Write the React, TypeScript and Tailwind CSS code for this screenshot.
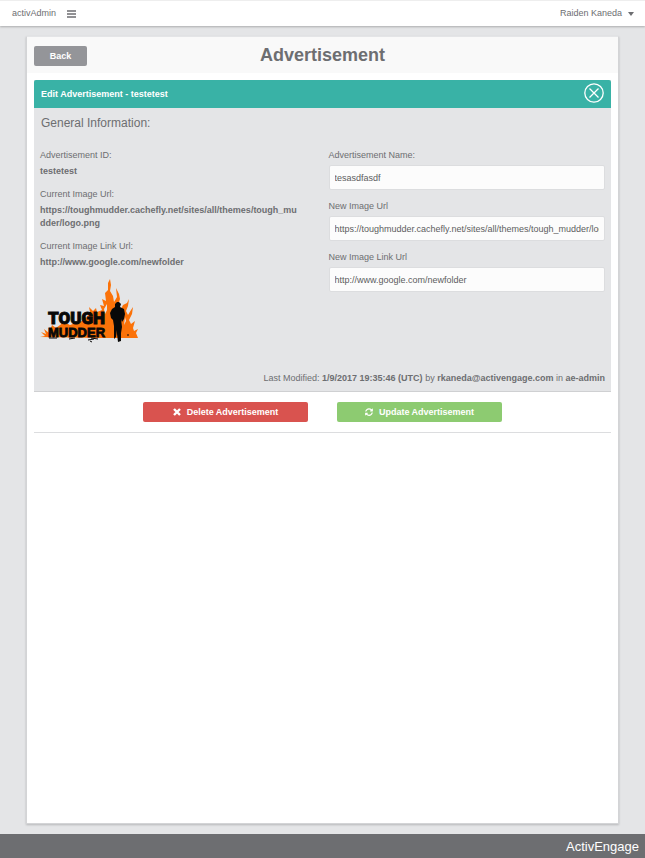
import { FaSyncAlt } from "react-icons/fa";

function Logo() {
  return (
    <svg viewBox="0 0 98 64" className="h-[64px] w-[98px]" role="img" aria-label="Tough Mudder">
      <path
        fill="#fb7209"
        d="M0 58 L5 57 L1 53 L6 55 L4 50 L9 54 L12 46 L16 49 L24 43 L30 46 L42 42 L43 34 L46 39 L50 33 L49 28 L53 32 L56 29 L57 33 L62 31 L60 26 L64 27 L62 20 L66 22 L65 14 L68 11 L68 4 L70 0 L71 6 L70 12 L73 17 L74 23 L77 18 L76 9 L79 15 L80 20 L78 27 L81 30 L83 26 L87 24 L89 20 L88 27 L86 32 L88 36 L91 31 L93 28 L92 35 L89 41 L91 45 L95 42 L93 49 L94 52 L98 50 L96 54 L98 59 L60 59 Z"
      />
      <path fill="#e4e5e7" d="M64 30 L67 25 L67 31 L65 35 Z M85 38 L86 42 L84 46 Z" />
      <g fill="#080808" stroke="#080808">
        <text x="8" y="45" fontSize="17" fontWeight="900" strokeWidth="0.9" fontFamily="Roboto, sans-serif">TOUGH</text>
        <text x="8" y="58" fontSize="13" fontWeight="700" strokeWidth="0.8" fontFamily="'Liberation Sans', Arial, sans-serif">MUDDER</text>
      </g>
      <path
        fill="#080808"
        d="M75 28 L75 25 L77 23 L79 23 L81 25 L80 28 L84 30 L85 35 L84 40 L82 43 L81 40 L82 48 L81 54 L81 62 L78 63 L77 55 L77 51 L76 58 L74 60 L74 47 L73 41 L71 39 L70 34 L72 30 Z"
      />
      <path stroke="#080808" strokeWidth="1" fill="none" d="M9 59h8M29 60l6-1M48 61l6-1M51 59l7 1M50 62l2 1M87 56h2" />
    </svg>
  );
}

function Detail({ label, value }: { label: string; value: string }) {
  return (
    <div className="mb-[10px]">
      <dt>{label}</dt>
      <dd className="mt-[3px] font-bold break-all">{value}</dd>
    </div>
  );
}

function Field({ id, label, value }: { id: string; label: string; value: string }) {
  return (
    <div className="mb-[10px]">
      <label htmlFor={id} className="block">{label}</label>
      <input
        id={id}
        type="text"
        defaultValue={value}
        className="mt-[3px] block h-[25px] w-full rounded-xs border border-[#dcdddf] bg-[#fcfcfc] px-[5px] text-[#5c5d60]"
      />
    </div>
  );
}

export default function App() {
  return (
    <div className="flex min-h-screen flex-col bg-[#e4e5e7] font-['Liberation_Sans',Arial,sans-serif] text-[9px] leading-[13px] text-[#6d6e71]">
      <header className="flex h-[26px] items-center justify-between border-t border-[#eee] bg-white pr-[11px] pl-3 shadow-[0_1px_2px_rgba(0,0,0,0.25)]">
        <div className="flex items-center gap-[11px]">
          <span>activAdmin</span>
          <button type="button" aria-label="Toggle menu">
            <svg viewBox="0 0 9 8" className="h-2 w-[9px]" stroke="currentColor" strokeWidth="1.4">
              <path d="M0 1h9M0 4h9M0 7h9" />
            </svg>
          </button>
        </div>
        <button type="button" className="flex items-center gap-[6px]">
          Raiden Kaneda
          <svg viewBox="0 0 6 4" className="h-1 w-[6px]" fill="currentColor">
            <path d="M0 0h6L3 4z" />
          </svg>
        </button>
      </header>

      <main className="mx-[26px] mt-[10px] mb-[10px] flex-1 border border-[#d3d4d6] border-t-[#e4e5e7] bg-white shadow-[0_1px_2px_rgba(0,0,0,0.2)]">
        <div className="grid h-9 grid-cols-[1fr_auto_1fr] items-center bg-[#f9f9f9] px-[7px]">
          <button type="button" className="mt-[2px] h-5 w-[53px] rounded-xs bg-[#949599] font-bold text-white">Back</button>
          <h1 className="text-[18px] leading-[22px] font-bold">Advertisement</h1>
        </div>

        <div className="px-[7px] pt-[7px]">
          <section className="border-b border-[#cfd0d2] bg-[#e4e5e7]">
            <div className="flex h-7 items-center justify-between rounded-t-xs bg-[#39b2a6] px-[7px] font-bold text-white">
              <h2>Edit Advertisement - testetest</h2>
              <button type="button" aria-label="Close">
                <svg viewBox="0 0 20 20" className="mb-[2px] size-5" fill="none" stroke="currentColor" strokeWidth="1.3">
                  <circle cx="10" cy="10" r="9.2" />
                  <path d="M5.5 5.5l9 9M14.5 5.5l-9 9" />
                </svg>
              </button>
            </div>
            <h3 className="px-[7px] pt-2 text-[12px] leading-[15px]">General Information:</h3>
            <div className="grid grid-cols-2 pt-[18px]">
              <div className="pr-6 pl-[6px]">
                <dl>
                  <Detail label="Advertisement ID:" value="testetest" />
                  <Detail label="Current Image Url:" value="https://toughmudder.cachefly.net/sites/all/themes/tough_mudder/logo.png" />
                  <Detail label="Current Image Link Url:" value="http://www.google.com/newfolder" />
                </dl>
                <Logo />
              </div>
              <form className="px-[6px]">
                <Field id="ad-name" label="Advertisement Name:" value="tesasdfasdf" />
                <Field id="image-url" label="New Image Url" value="https://toughmudder.cachefly.net/sites/all/themes/tough_mudder/logo.png" />
                <Field id="link-url" label="New Image Link Url" value="http://www.google.com/newfolder" />
              </form>
            </div>
            <p className="px-[6px] pt-[29px] pb-[6px] text-right">
              Last Modified: <b>1/9/2017 19:35:46 (UTC)</b> by <b>rkaneda@activengage.com</b> in <b>ae-admin</b>
            </p>
          </section>
          <div className="flex justify-center gap-[29px] border-b border-[#dcdddf] py-[10px] font-bold text-white">
            <button type="button" className="flex h-5 w-[165px] items-center justify-center gap-[6px] rounded-xs bg-[#d9534f]">
              <svg viewBox="0 0 8 8" className="size-2" stroke="currentColor" strokeWidth="2.4">
                <path d="M1 1l6 6M7 1l-6 6" />
              </svg>
              Delete Advertisement
            </button>
            <button type="button" className="flex h-5 w-[165px] items-center justify-center gap-[6px] rounded-xs bg-[#8dcb71]">
              <FaSyncAlt size={8} /> Update Advertisement
            </button>
          </div>
        </div>
      </main>

      <footer className="flex h-6 items-center justify-end bg-[#6d6e71] px-[6px] text-[13px] text-white">ActivEngage</footer>
    </div>
  );
}
